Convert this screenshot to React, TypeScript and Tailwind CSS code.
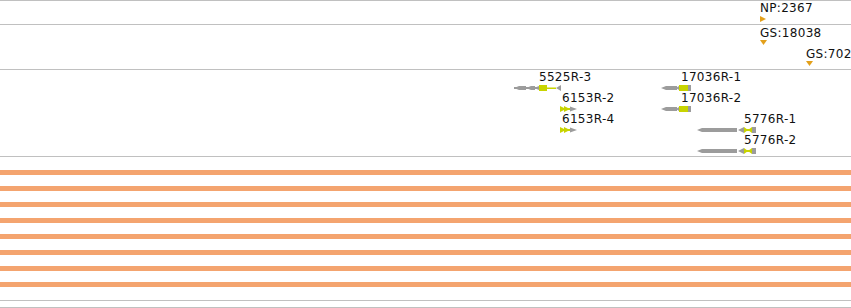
const GRAY = '#9c9c9c';
const LIME = '#c8d400';

// gene glyph drawn into the feature track svg; r = top of the row
function LeftGene({ x, r }: { x: number; r: number }) {
  // 17036R style: gray arrow pointing left, lime exon, gray stub
  const cy = r + 3;
  return (
    <g>
      <polygon points={`${x},${cy} ${x + 5},${r + 1} ${x + 5},${r + 5}`} fill={GRAY} />
      <rect x={x + 5} y={r + 1} width={11} height={4} fill={GRAY} />
      <polygon points={`${x + 15},${cy} ${x + 18},${r + 1} ${x + 18},${r + 5}`} fill={GRAY} />
      <rect x={x + 18} y={r} width={9} height={6} fill={LIME} />
      <rect x={x + 27} y={r} width={3} height={6} fill={GRAY} />
    </g>
  );
}

function SmallGene({ x, r }: { x: number; r: number }) {
  // 6153R style: lime double arrow then gray tip
  const cy = r + 3;
  return (
    <g>
      <polygon points={`${x},${r} ${x + 6},${cy} ${x},${r + 6}`} fill={LIME} />
      <polygon points={`${x + 4},${r} ${x + 10},${cy} ${x + 4},${r + 6}`} fill={LIME} />
      <rect x={x} y={cy - 1} width={10} height={2} fill={LIME} />
      <polygon points={`${x + 10},${r + 0.5} ${x + 17},${cy} ${x + 10},${r + 5.5}`} fill={GRAY} />
    </g>
  );
}

function LongGene({ x, r }: { x: number; r: number }) {
  // 5776R style: long gray arrow, small gray tip, lime bowtie, gray stub
  const cy = r + 3;
  return (
    <g>
      <polygon points={`${x},${cy} ${x + 5},${r + 1} ${x + 5},${r + 5}`} fill={GRAY} />
      <rect x={x + 5} y={r + 1} width={35} height={4} fill={GRAY} />
      <polygon points={`${x + 41},${cy} ${x + 47},${r} ${x + 47},${r + 6}`} fill={GRAY} />
      <polygon points={`${x + 47},${r} ${x + 51},${cy} ${x + 47},${r + 6}`} fill={LIME} />
      <polygon points={`${x + 55},${r} ${x + 51},${cy} ${x + 55},${r + 6}`} fill={LIME} />
      <rect x={x + 47} y={cy - 1} width={8} height={2} fill={LIME} />
      <rect x={x + 55} y={r} width={4} height={6} fill={GRAY} />
    </g>
  );
}

function Gene5525({ r }: { r: number }) {
  const cy = r + 3;
  return (
    <g>
      <rect x={514} y={cy - 1} width={26} height={2} fill={GRAY} />
      <polygon points={`514,${cy} 519,${r + 1} 519,${r + 5}`} fill={GRAY} />
      <rect x={519} y={r + 1} width={7} height={4} fill={GRAY} />
      <polygon points={`526,${cy} 531,${r + 1} 531,${r + 5}`} fill={GRAY} />
      <rect x={531} y={r + 1} width={4} height={4} fill={GRAY} />
      <polygon points={`534,${cy} 539,${r + 1} 539,${r + 5}`} fill={GRAY} />
      <rect x={539} y={r} width={8} height={6} fill={LIME} />
      <rect x={547} y={cy - 0.5} width={9} height={1.5} fill={LIME} />
      <polygon points={`556,${cy} 561,${r} 561,${r + 6}`} fill={GRAY} />
    </g>
  );
}

const labels = [
  { text: '5525R-3', x: 539, row: 0 },
  { text: '17036R-1', x: 681, row: 0 },
  { text: '6153R-2', x: 562, row: 1 },
  { text: '17036R-2', x: 681, row: 1 },
  { text: '6153R-4', x: 562, row: 2 },
  { text: '5776R-1', x: 744, row: 2 },
  { text: '5776R-2', x: 744, row: 3 },
];

export default function App() {
  return (
    <div className="w-[851px] h-[308px] bg-white overflow-hidden flex flex-col border-t border-[#c0c0c0] text-[12px] leading-[14px] tracking-[0.3px] text-[#111] font-['DejaVu_Sans',sans-serif]">
      {/* NP track */}
      <div className="relative h-[24px] shrink-0 border-b border-[#c0c0c0]">
        <div className="absolute left-[760px] top-0">NP:2367</div>
        <svg className="absolute left-[760px] top-[15px]" width="6" height="6">
          <polygon points="0,0 6,3 0,6" fill="#e3a01b" />
        </svg>
      </div>

      {/* GS track */}
      <div className="relative h-[45px] shrink-0 border-b border-[#c0c0c0]">
        <div className="absolute left-[760px] top-[1px]">GS:18038</div>
        <svg className="absolute left-[760px] top-[15px]" width="7" height="5">
          <polygon points="0,0 7,0 3.5,5" fill="#e3a01b" />
        </svg>
        <div className="absolute left-[806px] top-[22px] whitespace-nowrap">GS:7025</div>
        <svg className="absolute left-[806px] top-[36px]" width="7" height="5">
          <polygon points="0,0 7,0 3.5,5" fill="#e3a01b" />
        </svg>
      </div>

      {/* gene track */}
      <div className="relative h-[87px] shrink-0 border-b border-[#c0c0c0]">
        <svg className="absolute inset-0" width="851" height="86">
          <Gene5525 r={15} />
          <LeftGene x={661} r={15} />
          <SmallGene x={560} r={36} />
          <LeftGene x={661} r={36} />
          <SmallGene x={560} r={57} />
          <LongGene x={697} r={57} />
          <LongGene x={697} r={78} />
        </svg>
        {labels.map((l) => (
          <div
            key={l.text}
            className="absolute whitespace-nowrap"
            style={{ left: l.x, top: l.row * 21 }}
          >
            {l.text}
          </div>
        ))}
      </div>

      {/* coverage track */}
      <div className="h-[144px] shrink-0 border-b border-[#c0c0c0] flex flex-col gap-[11px] pt-[13px]">
        {[0, 1, 2, 3, 4, 5, 6, 7].map((i) => (
          <div key={i} className="h-[5px] bg-[#f4a46f]" />
        ))}
      </div>

      <div className="h-[7px] shrink-0 border-b border-[#c0c0c0]" />
    </div>
  );
}
